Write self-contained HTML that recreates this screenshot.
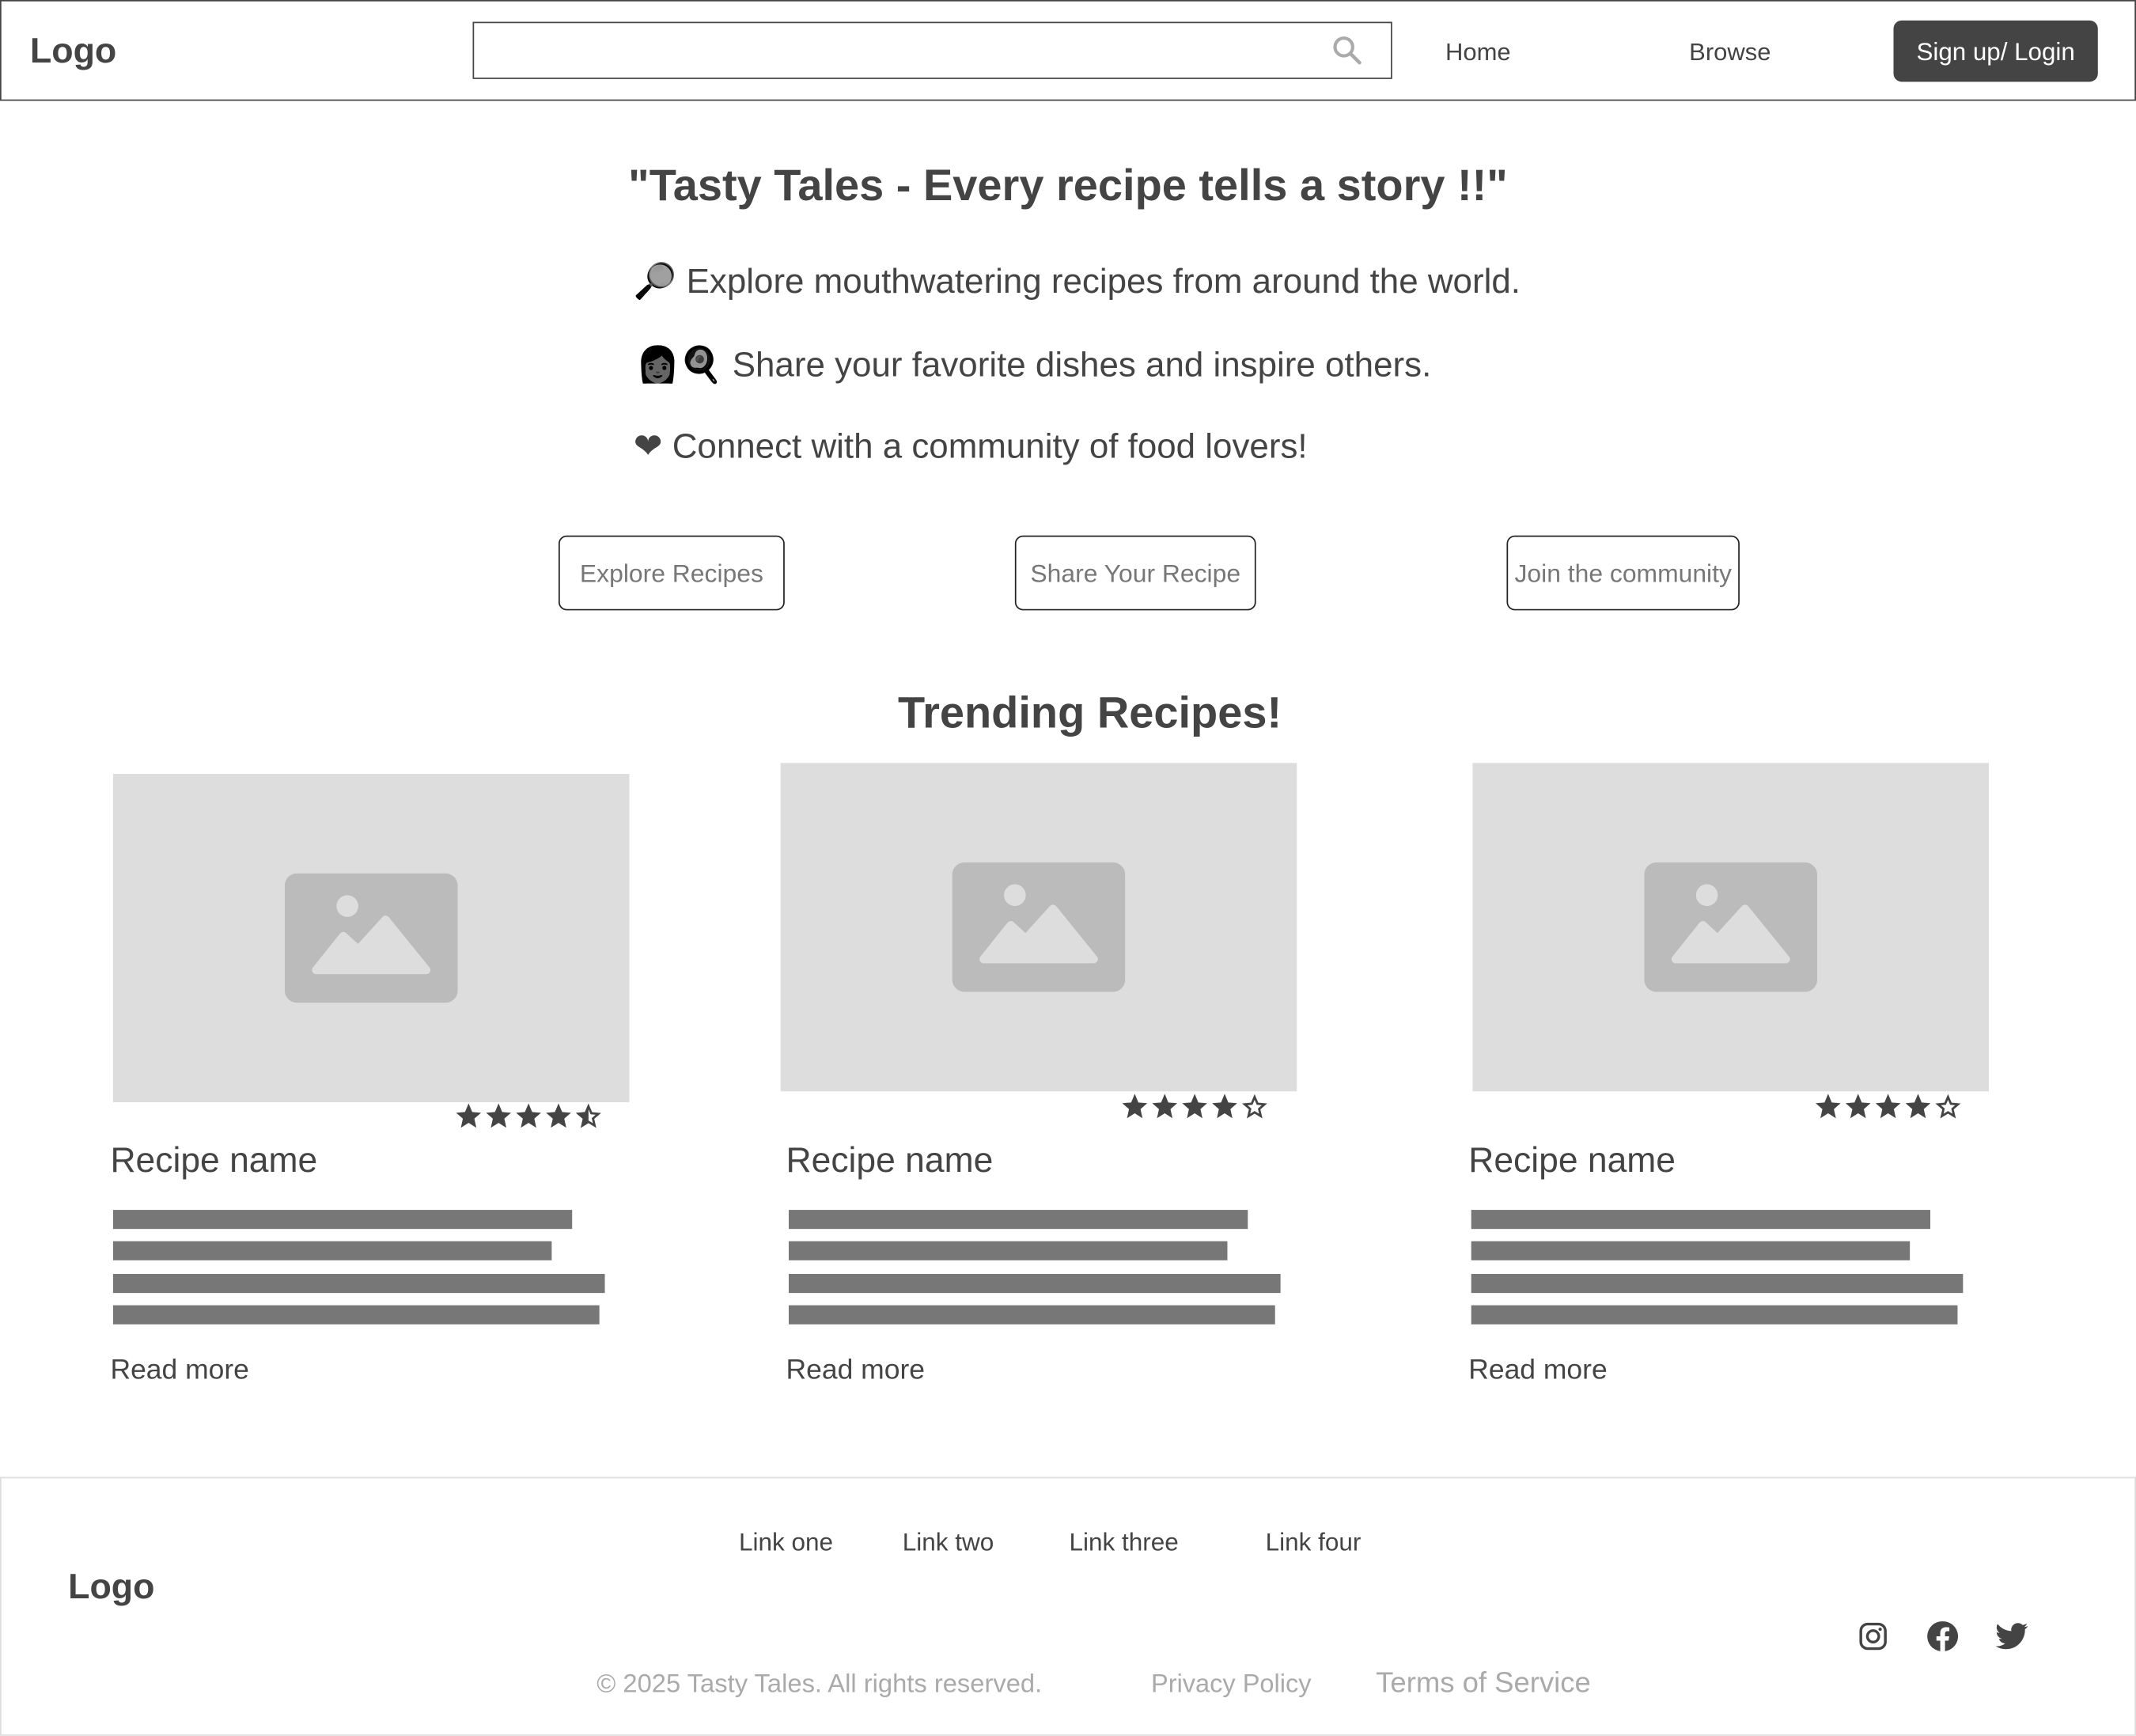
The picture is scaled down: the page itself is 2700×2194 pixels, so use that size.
<!DOCTYPE html>
<html><head><meta charset="utf-8"><style>
html,body{margin:0;padding:0;background:#fff;overflow:hidden}
body{width:2700px;height:2184px}
#w{position:absolute;left:0;top:0;width:1568px;height:1269px;transform:scale(1.72194);transform-origin:0 0;font-family:"Liberation Sans","DejaVu Sans","Noto Sans CJK JP",sans-serif;color:#444}
.a{position:absolute;white-space:nowrap}
.c{position:absolute;white-space:nowrap;transform:translateX(-50%)}
.btn{position:absolute;border:1.2px solid #222;border-radius:6px;box-sizing:border-box;color:#777;font-size:18.5px;display:flex;align-items:center;justify-content:center}
.img{position:absolute;background:#ddd;width:379px;height:241px}
.img svg{position:absolute;left:126px;top:73px}
.bar{position:absolute;background:#777;height:14px}
.name{position:absolute;font-size:25.8px;line-height:30px}
.rm{position:absolute;font-size:20.6px;line-height:24px}
.em{filter:grayscale(1) brightness(0.55) contrast(1.6)}
</style></head><body><div id="w">
<!-- header -->
<div style="position:absolute;left:0;top:0;width:1568px;height:74px;border:1.2px solid #444;box-sizing:border-box"></div>
<div class="a" style="left:22px;top:21px;font-size:26px;font-weight:bold;line-height:32px">Logo</div>
<div style="position:absolute;left:347px;top:16px;width:675px;height:42px;border:1.2px solid #444;box-sizing:border-box"></div>
<svg style="position:absolute;left:978px;top:26px" width="22" height="22" viewBox="0 0 22 22"><circle cx="8.5" cy="8.5" r="6.5" fill="none" stroke="#aaa" stroke-width="2.4"/><line x1="13.5" y1="13.5" x2="20" y2="20" stroke="#aaa" stroke-width="2.6" stroke-linecap="round"/></svg>
<div class="c" style="left:1085px;top:27px;font-size:18px;line-height:22px">Home</div>
<div class="c" style="left:1270px;top:27px;font-size:18px;line-height:22px">Browse</div>
<div style="position:absolute;left:1390px;top:15px;width:150px;height:45px;background:#444;border-radius:6px;color:#fff;font-size:18.2px;display:flex;align-items:center;justify-content:center;padding-top:1px;box-sizing:border-box">Sign up/ Login</div>
<!-- hero -->
<div class="c" style="left:784px;top:117px;font-size:32.5px;font-weight:bold;line-height:38px">"Tasty Tales - Every recipe tells a story !!"</div>
<div class="a" style="left:465px;top:192px;font-size:25.5px;line-height:30px"><span class="em">🔎</span> Explore mouthwatering recipes from around the world.</div>
<div class="a" style="left:467px;top:253px;font-size:25.5px;line-height:30px"><span class="em">👩🍳</span> Share your favorite dishes and inspire others.</div>
<div class="a" style="left:465px;top:313px;font-size:25.5px;line-height:30px">❤ Connect with a community of food lovers!</div>
<div class="btn" style="left:410px;top:393px;width:166px;height:55px">Explore Recipes</div>
<div class="btn" style="left:745px;top:393px;width:177px;height:55px">Share Your Recipe</div>
<div class="btn" style="left:1106px;top:393px;width:171px;height:55px">Join the community</div>
<div class="c" style="left:800px;top:504px;font-size:32.5px;font-weight:bold;line-height:38px">Trending Recipes!</div>
<!-- cards -->
<svg width="0" height="0" style="position:absolute"><defs>
<symbol id="ic" viewBox="0 0 127 95"><rect width="127" height="95" rx="9" fill="#bbb"/><circle cx="46" cy="24" r="8" fill="#ddd"/><path d="M23 71 L43 46 L54 56 L74 34 L104 71 Z" fill="#ddd" stroke="#ddd" stroke-width="6" stroke-linejoin="round"/></symbol>
<symbol id="st" viewBox="0 0 24 24"><path d="M12 2l2.9 6.9 7.1.6-5.4 4.7 1.6 7.3L12 17.6 5.8 21.5l1.6-7.3L2 9.5l7.1-.6z" fill="#444"/></symbol>
<symbol id="se" viewBox="0 0 24 24"><path d="M12 4.5l2.3 5.4 5.6.5-4.3 3.7 1.3 5.7L12 16.8l-4.9 3 1.3-5.7-4.3-3.7 5.6-.5z" fill="none" stroke="#444" stroke-width="1.8"/></symbol>
<symbol id="sh" viewBox="0 0 24 24"><path d="M12 4.5l2.3 5.4 5.6.5-4.3 3.7 1.3 5.7L12 16.8l-4.9 3 1.3-5.7-4.3-3.7 5.6-.5z" fill="none" stroke="#444" stroke-width="1.8"/><path d="M12 2 L12 17.6 5.8 21.5l1.6-7.3L2 9.5l7.1-.6z" fill="#444"/></symbol>
</defs></svg>

<div class="img" style="left:83px;top:568px"><svg width="127" height="95"><use href="#ic"/></svg></div>
<div class="img" style="left:573px;top:560px"><svg width="127" height="95"><use href="#ic"/></svg></div>
<div class="img" style="left:1081px;top:560px"><svg width="127" height="95"><use href="#ic"/></svg></div>

<div class="a" style="left:333px;top:808px;height:22px">
<svg width="22" height="22"><use href="#st"/></svg><svg width="22" height="22"><use href="#st"/></svg><svg width="22" height="22"><use href="#st"/></svg><svg width="22" height="22"><use href="#st"/></svg><svg width="22" height="22"><use href="#sh"/></svg></div>
<div class="a" style="left:822px;top:801px;height:22px">
<svg width="22" height="22"><use href="#st"/></svg><svg width="22" height="22"><use href="#st"/></svg><svg width="22" height="22"><use href="#st"/></svg><svg width="22" height="22"><use href="#st"/></svg><svg width="22" height="22"><use href="#se"/></svg></div>
<div class="a" style="left:1331px;top:801px;height:22px">
<svg width="22" height="22"><use href="#st"/></svg><svg width="22" height="22"><use href="#st"/></svg><svg width="22" height="22"><use href="#st"/></svg><svg width="22" height="22"><use href="#st"/></svg><svg width="22" height="22"><use href="#se"/></svg></div>

<div class="name" style="left:81px;top:837px">Recipe name</div>
<div class="name" style="left:577px;top:837px">Recipe name</div>
<div class="name" style="left:1078px;top:837px">Recipe name</div>

<div class="bar" style="left:83px;top:888px;width:337px"></div>
<div class="bar" style="left:83px;top:911px;width:322px"></div>
<div class="bar" style="left:83px;top:935px;width:361px"></div>
<div class="bar" style="left:83px;top:958px;width:357px"></div>
<div class="bar" style="left:579px;top:888px;width:337px"></div>
<div class="bar" style="left:579px;top:911px;width:322px"></div>
<div class="bar" style="left:579px;top:935px;width:361px"></div>
<div class="bar" style="left:579px;top:958px;width:357px"></div>
<div class="bar" style="left:1080px;top:888px;width:337px"></div>
<div class="bar" style="left:1080px;top:911px;width:322px"></div>
<div class="bar" style="left:1080px;top:935px;width:361px"></div>
<div class="bar" style="left:1080px;top:958px;width:357px"></div>

<div class="rm" style="left:81px;top:994px">Read more</div>
<div class="rm" style="left:577px;top:994px">Read more</div>
<div class="rm" style="left:1078px;top:994px">Read more</div>
<!-- footer -->
<div style="position:absolute;left:0;top:1084px;width:1568px;height:190px;border:1.2px solid #ddd;box-sizing:border-box"></div>
<div class="a" style="left:50px;top:1148px;font-size:26px;font-weight:bold;line-height:32px">Logo</div>
<div class="c" style="left:577px;top:1121px;font-size:18.3px;line-height:22px">Link one</div>
<div class="c" style="left:696px;top:1121px;font-size:18.3px;line-height:22px">Link two</div>
<div class="c" style="left:825px;top:1121px;font-size:18.3px;line-height:22px">Link three</div>
<div class="c" style="left:964px;top:1121px;font-size:18.3px;line-height:22px">Link four</div>
<svg style="position:absolute;left:1364px;top:1190px" width="22" height="22" viewBox="0 0 22 22"><rect x="2" y="2" width="18" height="18" rx="5" fill="none" stroke="#444" stroke-width="2"/><circle cx="11" cy="11" r="4.2" fill="none" stroke="#444" stroke-width="2"/><circle cx="16.2" cy="5.8" r="1.2" fill="#444"/></svg>
<svg style="position:absolute;left:1414px;top:1189px" width="24" height="24" viewBox="0 0 24 24"><path d="M12 1a11 11 0 0 0-1.7 21.9v-7.7H7.5V12h2.8V9.6c0-2.8 1.6-4.3 4.2-4.3 1.2 0 2.5.2 2.5.2v2.7h-1.4c-1.4 0-1.8.9-1.8 1.7V12h3.1l-.5 3.2h-2.6v7.7A11 11 0 0 0 12 1z" fill="#444"/></svg>
<svg style="position:absolute;left:1465px;top:1190px" width="24" height="22" viewBox="0 0 24 20"><path d="M23.6 2.4c-.9.4-1.8.6-2.8.8 1-.6 1.8-1.6 2.1-2.7-.9.6-2 1-3.1 1.2A4.9 4.9 0 0 0 11.5 6.1 13.9 13.9 0 0 1 1.4.9a4.9 4.9 0 0 0 1.5 6.6c-.8 0-1.6-.3-2.2-.6 0 2.4 1.7 4.4 3.9 4.8-.7.2-1.5.2-2.2.1.6 2 2.4 3.4 4.6 3.4A9.9 9.9 0 0 1 0 17.2 13.9 13.9 0 0 0 7.5 19.4c9.1 0 14-7.5 14-14v-.6c1-.7 1.8-1.6 2.1-2.4z" fill="#444"/></svg>
<div class="a" style="left:438px;top:1226px;font-size:19px;line-height:22px;color:#aaa">© 2025 Tasty Tales. All rights reserved.</div>
<div class="a" style="left:845px;top:1226px;font-size:18.9px;line-height:22px;color:#aaa">Privacy Policy</div>
<div class="a" style="left:1010px;top:1224px;font-size:21.2px;line-height:24px;color:#aaa">Terms of Service</div>
</div></body></html>
